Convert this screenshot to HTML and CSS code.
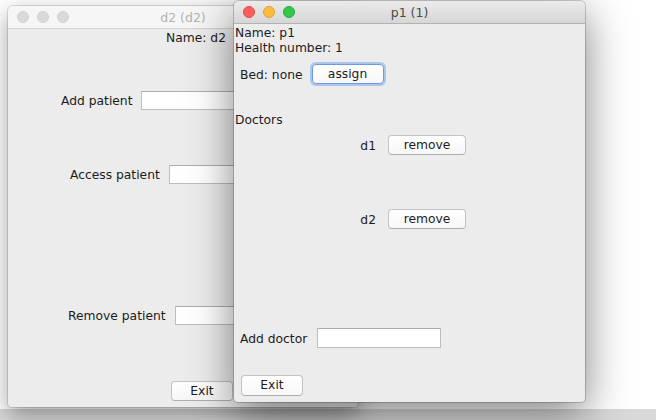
FILE: index.html
```html
<!DOCTYPE html>
<html>
<head>
<meta charset="utf-8">
<link rel="stylesheet" href="styles.css">
</head>
<body>
<div class="screen">
  <div class="desktop">
    <div class="window win-back">
      <div class="titlebar inactive">
        <div class="lights">
          <span class="light gray"></span><span class="light gray"></span><span class="light gray"></span>
        </div>
        <div class="title">d2 (d2)</div>
      </div>
      <div class="content back-content">
        <div class="line name-d2">Name: d2</div>
        <div class="row add-patient"><span class="label">Add patient</span><span class="field wide"></span></div>
        <div class="row access-patient"><span class="label">Access patient</span><span class="field wide"></span></div>
        <div class="row remove-patient"><span class="label">Remove patient</span><span class="field wide"></span></div>
        <div class="row exit-back"><button class="btn exit">Exit</button></div>
      </div>
    </div>
    <div class="window win-front">
      <div class="titlebar">
        <div class="lights">
          <span class="light red"></span><span class="light yellow"></span><span class="light green"></span>
        </div>
        <div class="title">p1 (1)</div>
      </div>
      <div class="content front-content">
        <div class="line first">Name: p1</div>
        <div class="line">Health number: 1</div>
        <div class="row bed-row"><span class="label">Bed: none</span><button class="btn assign focused">assign</button></div>
        <div class="line doctors">Doctors</div>
        <div class="row doc-row d1"><span class="doc-label">d1</span><button class="btn remove">remove</button></div>
        <div class="row doc-row d2"><span class="doc-label">d2</span><button class="btn remove">remove</button></div>
        <div class="row add-doctor"><span class="label">Add doctor</span><span class="field doc-field"></span></div>
        <div class="row exit-front"><button class="btn exit">Exit</button></div>
      </div>
    </div>
  </div>
  <div class="band"></div>
</div>
</body>
</html>
```
FILE: styles.css
```css
html, body {
  margin: 0;
  padding: 0;
  width: 656px;
  height: 420px;
  overflow: hidden;
  background: #ffffff;
  font-family: "DejaVu Sans", "Liberation Sans", sans-serif;
  font-size: 12.3px;
  color: #1c1c1c;
}

.screen {
  display: flex;
  flex-direction: column;
  width: 656px;
  height: 420px;
}

.desktop {
  position: relative;
  height: 409px;
  background: #ffffff;
}

.band {
  height: 11px;
  background: #d9d9d9;
}

.window {
  position: absolute;
  background: #ececec;
  border-radius: 5px 5px 4px 4px;
  display: flex;
  flex-direction: column;
  overflow: hidden;
}

.win-back {
  left: 8px;
  top: 6px;
  width: 350px;
  height: 401px;
  z-index: 1;
  box-shadow: 0 0 0 1px rgba(0,0,0,0.12), 0 8px 24px rgba(0,0,0,0.38);
}

.win-front {
  left: 234px;
  top: 1px;
  width: 351px;
  height: 401px;
  z-index: 2;
  box-shadow: 0 0 0 1px rgba(0,0,0,0.18), 0 12px 44px rgba(0,0,0,0.50);
}

.titlebar {
  position: relative;
  height: 22px;
  flex: none;
  background: linear-gradient(#ebebeb, #d6d6d6);
  border-bottom: 1px solid #b2b2b2;
  display: flex;
  align-items: center;
  justify-content: center;
}

.titlebar.inactive {
  background: #f6f6f6;
  border-bottom: 1px solid #d2d2d2;
}

.lights {
  position: absolute;
  left: 9px;
  top: 5px;
  display: flex;
  gap: 8px;
}

.light {
  width: 12px;
  height: 12px;
  border-radius: 50%;
  box-sizing: border-box;
}

.light.gray { background: #d9d9d9; border: 1px solid #d0d0d0; }
.light.red { background: #fc605c; border: 1px solid #de4a45; }
.light.yellow { background: #fdbc40; border: 1px solid #dea234; }
.light.green { background: #34c84a; border: 1px solid #27aa36; }

.title {
  font-size: 12.5px;
  color: #4a4a4a;
}

.inactive .title {
  color: #b3b3b3;
}

.content {
  flex: 1;
  display: flex;
  flex-direction: column;
  align-items: flex-start;
}

.line {
  line-height: 15px;
  height: 15px;
  white-space: nowrap;
}

.row {
  display: flex;
  align-items: center;
  white-space: nowrap;
}

.label {
  padding-top: 1px;
}

.field {
  display: block;
  height: 19px;
  box-sizing: border-box;
  background: #ffffff;
  border: 1px solid #bdbdbd;
  border-top-color: #acacac;
}

.btn {
  font-family: inherit;
  font-size: 12.3px;
  color: #1c1c1c;
  height: 20px;
  padding: 0;
  box-sizing: border-box;
  background: linear-gradient(#ffffff, #f7f7f7);
  border: 1px solid #c3c3c3;
  border-bottom-color: #aeaeae;
  border-radius: 4px;
  line-height: 17px;
}

/* back window */
.back-content {
  padding-top: 2px;
}

.name-d2 {
  margin-left: 158px;
}

.back-content .label {
  margin-right: 9px;
}

.add-patient {
  margin-top: 45px;
  margin-left: 53px;
}

.access-patient {
  margin-top: 55px;
  margin-left: 62px;
}

.remove-patient {
  margin-top: 122px;
  margin-left: 60px;
}

.field.wide {
  width: 160px;
}

.exit-back {
  margin-top: 56px;
  margin-left: 163px;
}

.exit {
  width: 62px;
}

/* front window */
.front-content {
  padding-top: 2px;
  padding-left: 1px;
}

.bed-row {
  margin-top: 8px;
  margin-left: 5px;
}

.bed-row .label {
  margin-right: 9px;
}

.assign {
  width: 72px;
}

.btn.focused {
  border-color: #6d9be0;
  box-shadow: 0 0 0 2px rgba(120, 165, 235, 0.55);
}

.doctors {
  margin-top: 28px;
  line-height: 16px;
}

.doc-row {
  margin-top: 8px;
}

.doc-label {
  width: 141px;
  text-align: right;
  margin-right: 12px;
  padding-top: 1px;
}

.doc-row.d2 {
  margin-top: 54px;
}

.remove {
  width: 78px;
}

.add-doctor {
  margin-top: 99px;
  margin-left: 5px;
}

.add-doctor .label {
  margin-right: 10px;
}

.doc-field {
  width: 124px;
  height: 20px;
}

.exit-front {
  margin-top: 27px;
  margin-left: 6px;
}

.exit-front .exit {
  height: 21px;
}
```
